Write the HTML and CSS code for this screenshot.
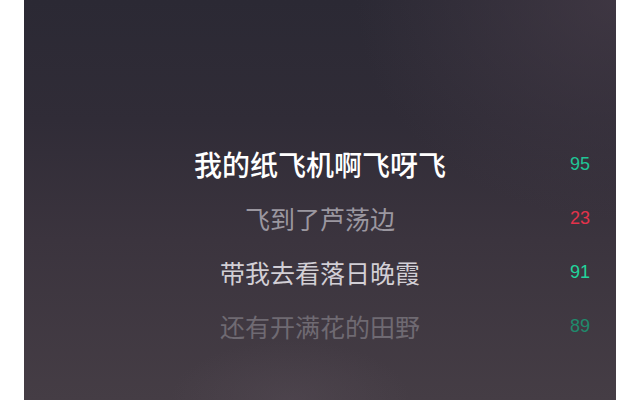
FILE: index.html
```html
<!DOCTYPE html>
<html lang="zh-CN">
<head>
<meta charset="utf-8">
<title>歌词</title>
<link rel="stylesheet" href="styles.css">
</head>
<body>
<main class="panel">
  <ul class="lyrics">
    <li class="row current"><span class="line">我的纸飞机啊飞呀飞</span><span class="score good">95</span></li>
    <li class="row dim"><span class="line">飞到了芦荡边</span><span class="score bad">23</span></li>
    <li class="row near"><span class="line">带我去看落日晚霞</span><span class="score good bright">91</span></li>
    <li class="row far"><span class="line">还有开满花的田野</span><span class="score good faded">89</span></li>
  </ul>
</main>
</body>
</html>
```

FILE: styles.css
```css
html, body {
  margin: 0;
  padding: 0;
  background: #ffffff;
}
.panel {
  margin: 0 24px;
  height: 400px;
  overflow: hidden;
  background:
    radial-gradient(ellipse 120px 60px at 45% 100%, rgba(90, 80, 90, 0.35), rgba(90, 80, 90, 0) 100%),
    radial-gradient(ellipse 260px 220px at 100% 0%, rgba(70, 60, 72, 0.7), rgba(70, 60, 72, 0) 100%),
    linear-gradient(to bottom, #2b2934 0%, #302c37 30%, #3b343e 60%, #453d45 100%);
  font-family: "Noto Sans CJK SC", "Noto Sans", sans-serif;
}
.lyrics {
  list-style: none;
  margin: 0;
  padding: 137px 26px 0 26px;
}
.row {
  display: grid;
  grid-template-columns: 1fr auto 1fr;
  align-items: center;
  height: 54px;
}
.line {
  grid-column: 2;
  font-size: 25px;
  line-height: 1;
  white-space: nowrap;
}
.score {
  grid-column: 3;
  justify-self: end;
  font-family: "Liberation Sans", Arial, sans-serif;
  font-size: 18px;
  line-height: 1;
}
.current .line {
  font-size: 28px;
  font-weight: 500;
  color: #ffffff;
}
.dim .line { color: #9b97a0; }
.near .line { color: #d2cfd5; }
.far .line { color: #6f6a72; }
.good { color: #20c596; }
.bright { color: #22d49c; }
.faded { color: #1f8a6c; }
.bad { color: #e3324b; }
```
